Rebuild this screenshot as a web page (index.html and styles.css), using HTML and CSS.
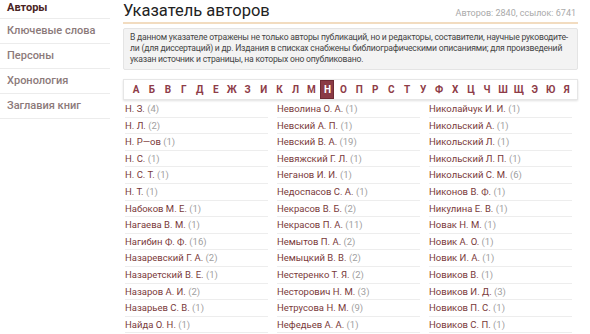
FILE: index.html
```html
<!DOCTYPE html>
<html lang="ru">
<head>
    <meta charset="UTF-8">
    <title>Указатель авторов</title>
    <link rel="stylesheet" href="styles.css">
</head>
<body>
    <div class="page">
        <ul class="sidebar">
            <li class="active">Авторы</li>
            <li>Ключевые слова</li>
            <li>Персоны</li>
            <li>Хронология</li>
            <li>Заглавия книг</li>
        </ul>
        <div class="main">
            <div class="head">
                <h1>Указатель авторов</h1>
                <span class="stats">Авторов: 2840, ссылок: 6741</span>
            </div>
            <div class="note">В данном указателе отражены не только авторы публикаций, но и редакторы, составители, научные руководите-<br>ли (для диссертаций) и др. Издания в списках снабжены библиографическими описаниями; для произведений<br>указан источник и страницы, на которых оно опубликовано.</div>
            <div class="letters">
                <a>А</a><a>Б</a><a>В</a><a>Г</a><a>Д</a><a>Е</a><a>Ж</a><a>З</a><a>И</a><a>К</a><a>Л</a><a>М</a><a class="current">Н</a><a>О</a><a>П</a><a>Р</a><a>С</a><a>Т</a><a>У</a><a>Ф</a><a>Х</a><a>Ц</a><a>Ч</a><a>Ш</a><a>Щ</a><a>Э</a><a>Ю</a><a>Я</a>
            </div>
            <div class="columns">
                <ul class="col">
                    <li>Н. З. <span>(4)</span></li>
                    <li>Н. Л. <span>(2)</span></li>
                    <li>Н. Р—ов <span>(1)</span></li>
                    <li>Н. С. <span>(1)</span></li>
                    <li>Н. С. Т. <span>(1)</span></li>
                    <li>Н. Т. <span>(1)</span></li>
                    <li>Набоков М. Е. <span>(1)</span></li>
                    <li>Нагаева В. М. <span>(1)</span></li>
                    <li>Нагибин Ф. Ф. <span>(16)</span></li>
                    <li>Назаревский Г. А. <span>(2)</span></li>
                    <li>Назаретский В. Е. <span>(1)</span></li>
                    <li>Назаров А. И. <span>(2)</span></li>
                    <li>Назарьев С. В. <span>(1)</span></li>
                    <li>Найда О. Н. <span>(1)</span></li>
                </ul>
                <ul class="col">
                    <li>Неволина О. А. <span>(1)</span></li>
                    <li>Невский А. П. <span>(1)</span></li>
                    <li>Невский В. А. <span>(19)</span></li>
                    <li>Невяжский Г. Л. <span>(1)</span></li>
                    <li>Неганов И. И. <span>(1)</span></li>
                    <li>Недоспасов С. А. <span>(1)</span></li>
                    <li>Некрасов В. Б. <span>(2)</span></li>
                    <li>Некрасов П. А. <span>(11)</span></li>
                    <li>Немытов П. А. <span>(2)</span></li>
                    <li>Немыцкий В. В. <span>(2)</span></li>
                    <li>Нестеренко Т. Я. <span>(2)</span></li>
                    <li>Несторович Н. М. <span>(3)</span></li>
                    <li>Нетрусова Н. М. <span>(9)</span></li>
                    <li>Нефедьев А. А. <span>(1)</span></li>
                </ul>
                <ul class="col">
                    <li>Николайчук И. И. <span>(1)</span></li>
                    <li>Никольский А. <span>(1)</span></li>
                    <li>Никольский Л. <span>(1)</span></li>
                    <li>Никольский Л. П. <span>(1)</span></li>
                    <li>Никольский С. М. <span>(6)</span></li>
                    <li>Никонов В. Ф. <span>(1)</span></li>
                    <li>Никулина Е. В. <span>(1)</span></li>
                    <li>Новак Н. М. <span>(1)</span></li>
                    <li>Новик А. О. <span>(1)</span></li>
                    <li>Новик И. А. <span>(1)</span></li>
                    <li>Новиков В. <span>(1)</span></li>
                    <li>Новиков И. Д. <span>(3)</span></li>
                    <li>Новиков П. С. <span>(1)</span></li>
                    <li>Новиков С. П. <span>(1)</span></li>
                </ul>
            </div>
        </div>
    </div>
</body>
</html>
```

FILE: styles.css
```css
* {
    margin: 0;
    padding: 0;
    box-sizing: border-box;
}

body {
    font-family: Roboto, "Noto Sans", sans-serif;
    background: white;
    color: #333;
    overflow: hidden;
}

ul {
    list-style: none;
}

.page {
    display: flex;
    gap: 13px;
}

.sidebar {
    width: 110px;
    flex-shrink: 0;
}

.sidebar li {
    height: 25px;
    line-height: 24px;
    padding-left: 7px;
    font-size: 11px;
    font-weight: 500;
    color: #8c7a7a;
    border-bottom: 1px solid #ececec;
}

.sidebar li.active {
    height: 19px;
    line-height: 16px;
    color: #4a2424;
    font-weight: 700;
}

.main {
    width: 455px;
}

.head {
    display: flex;
    justify-content: space-between;
    align-items: baseline;
    padding-top: 1px;
    height: 24px;
    border-bottom: 2px solid #f2dcc0;
}

h1 {
    font-size: 16.5px;
    font-weight: 400;
    color: #222;
}

.stats {
    font-size: 9px;
    color: #aaa;
    padding-right: 2px;
}

.note {
    margin-top: 4px;
    background: #f3f3f3;
    border: 1px solid #e4e4e4;
    border-radius: 2px;
    padding: 3px 6px 4px 6px;
    font-size: 8.6px;
    letter-spacing: -0.2px;
    line-height: 11px;
    color: #444;
    white-space: nowrap;
}

.letters {
    margin-top: 9px;
    height: 21px;
    display: flex;
    justify-content: space-between;
    align-items: stretch;
    padding: 0 3px 0 5px;
    border: 1px solid #e6e6e6;
    box-shadow: 0 1px 2px rgba(0,0,0,0.12);
}

.letters a {
    display: flex;
    align-items: center;
    justify-content: center;
    width: 14px;
    font-size: 10px;
    font-weight: 700;
    color: #8e3c48;
}

.letters a.current {
    background: #8a3a45;
    color: white;
    border: 1px solid #6e2a33;
}

.columns {
    display: flex;
    gap: 9px;
    padding: 1px 2px 0 2px;
}

.col {
    width: 143px;
}

.col li {
    height: 16.6px;
    padding-top: 2px;
    font-size: 9.5px;
    color: #7a3a3a;
    border-bottom: 1px solid #ededed;
    white-space: nowrap;
}

.col li span {
    color: #a0a0a0;
}
```
